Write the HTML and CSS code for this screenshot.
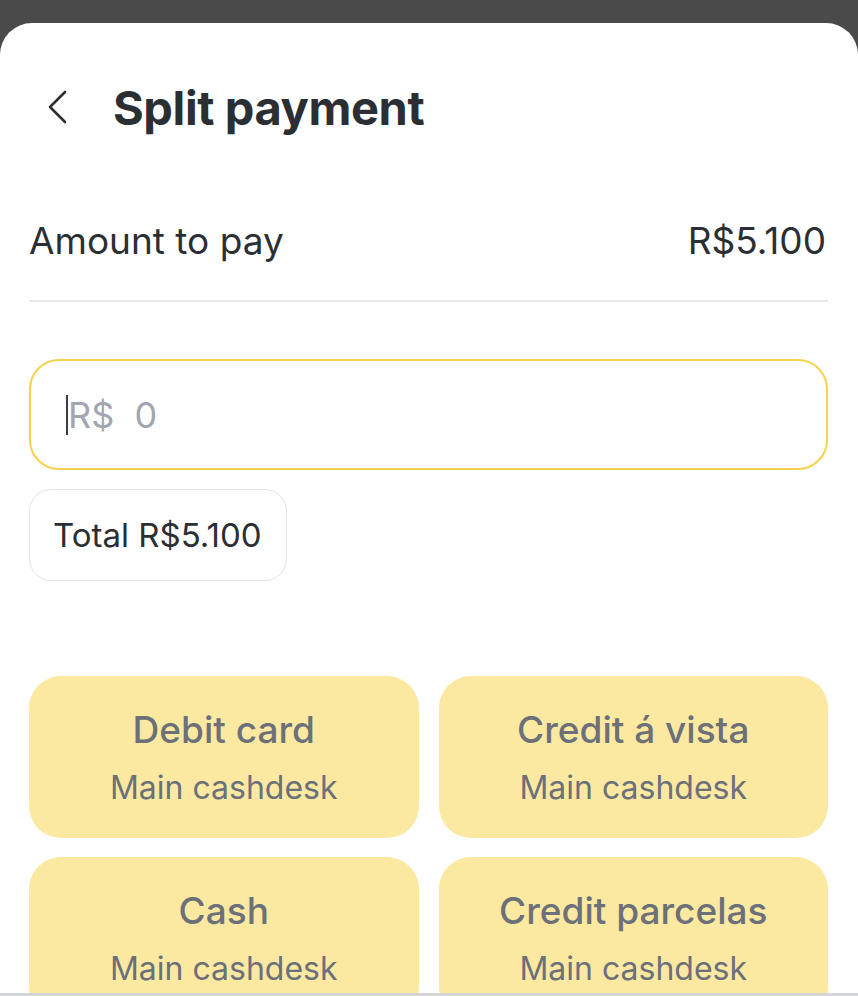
FILE: index.html
```html
<!DOCTYPE html>
<html lang="en">
<head>
  <meta charset="UTF-8">
  <meta name="viewport" content="width=device-width, initial-scale=1.0">
  <title>Split payment</title>
  <link rel="stylesheet" href="styles.css">
</head>
<body>

<div id="screen">
  <div class="sheet">
    <div class="header">
      <button class="back" aria-label="Back">
        <svg width="20" height="34" viewBox="0 0 20 34" fill="none">
          <path d="M18 2 L3 17 L18 32" stroke="#2b2f33" stroke-width="2.6" stroke-linecap="round" stroke-linejoin="round"/>
        </svg>
      </button>
      <h1 class="title">Split payment</h1>
    </div>

    <div class="amount-row">
      <span>Amount to pay</span>
      <span>R$5.100</span>
    </div>

    <div class="amount-input">
      <span class="caret"></span>
      <span class="placeholder">R$&nbsp; 0</span>
    </div>

    <div class="chip">Total R$5.100</div>

    <div class="methods">
      <div class="method">
        <div class="method-name">Debit card</div>
        <div class="method-desk">Main cashdesk</div>
      </div>
      <div class="method">
        <div class="method-name">Credit á vista</div>
        <div class="method-desk">Main cashdesk</div>
      </div>
      <div class="method">
        <div class="method-name">Cash</div>
        <div class="method-desk">Main cashdesk</div>
      </div>
      <div class="method">
        <div class="method-name">Credit parcelas</div>
        <div class="method-desk">Main cashdesk</div>
      </div>
    </div>
  </div>
  <div class="bottom-bar"></div>
</div>

</body>
</html>
```

FILE: styles.css
```css
body {
  margin: 0;
  font-family: Inter, "Noto Sans", sans-serif;
  background: #4a4a4a;
  color: #2b2f33;
}

#screen {
  height: 100vh;
  display: flex;
  flex-direction: column;
  padding-top: 23px;
  box-sizing: border-box;
}

.sheet {
  flex: 1;
  background: #fff;
  border-radius: 32px 32px 0 0;
  padding: 0 30px 0 29px;
  overflow: hidden;
}

.bottom-bar {
  height: 3px;
  background: #d4d5d7;
}

.header {
  display: flex;
  align-items: center;
  height: 64px;
  margin-top: 52px;
}

.back {
  border: none;
  background: none;
  padding: 0;
  margin-left: 18px;
  width: 20px;
  height: 34px;
  cursor: pointer;
}

.title {
  margin: 0 0 0 46px;
  font-size: 47px;
  font-weight: 700;
  letter-spacing: -0.4px;
}

.amount-row {
  display: flex;
  justify-content: space-between;
  align-items: center;
  height: 60px;
  margin-top: 71px;
  font-size: 37px;
  border-bottom: 2px solid #e6e7ec;
  padding-bottom: 30px;
  padding-right: 2px;
}

.amount-input {
  display: flex;
  align-items: center;
  height: 107px;
  margin-top: 57px;
  border: 2px solid #f6d24c;
  border-radius: 30px;
  padding-left: 35px;
  font-size: 36px;
}

.caret {
  width: 2px;
  height: 40px;
  background: #3a3d42;
}

.placeholder {
  color: #a1a6b0;
}

.chip {
  display: inline-flex;
  align-items: center;
  height: 90px;
  margin-top: 19px;
  padding: 0 24px 0 23px;
  border: 1px solid #e2e4ea;
  border-radius: 22px;
  font-size: 33px;
}

.methods {
  display: grid;
  grid-template-columns: 1fr 1fr;
  gap: 19px 20px;
  margin-top: 95px;
}

.method {
  height: 162px;
  background: #fbe8a1;
  border-radius: 32px;
  display: flex;
  flex-direction: column;
  align-items: center;
  justify-content: center;
  gap: 16px;
  color: #6b7079;
}

.method-name {
  font-size: 37px;
  font-weight: 500;
}

.method-desk {
  font-size: 32px;
}
```
